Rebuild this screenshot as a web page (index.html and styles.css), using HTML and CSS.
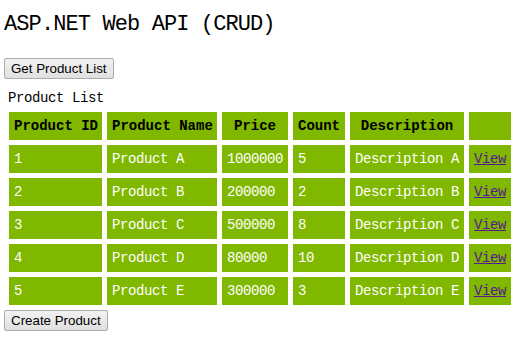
FILE: index.html
```html
<!DOCTYPE html>
<html lang="en">

<head>
  <meta charset="UTF-8" />
  <title>ASP.NET Web API (CRUD)</title>
  <link rel="stylesheet" href="styles.css">
</head>

<body>
  <h1 class="title">ASP.NET Web API (CRUD)</h1>

  <div class="actions">
    <button class="btn">Get Product List</button>
  </div>

  <table class="products">
    <caption>Product List</caption>
    <colgroup>
      <col class="c-id">
      <col class="c-name">
      <col class="c-price">
      <col class="c-count">
      <col class="c-desc">
      <col class="c-view">
    </colgroup>
    <thead>
      <tr>
        <th>Product ID</th>
        <th>Product Name</th>
        <th>Price</th>
        <th>Count</th>
        <th>Description</th>
        <th></th>
      </tr>
    </thead>
    <tbody>
      <tr>
        <td>1</td>
        <td>Product A</td>
        <td>1000000</td>
        <td>5</td>
        <td>Description A</td>
        <td><a href="#">View</a></td>
      </tr>
      <tr>
        <td>2</td>
        <td>Product B</td>
        <td>200000</td>
        <td>2</td>
        <td>Description B</td>
        <td><a href="#">View</a></td>
      </tr>
      <tr>
        <td>3</td>
        <td>Product C</td>
        <td>500000</td>
        <td>8</td>
        <td>Description C</td>
        <td><a href="#">View</a></td>
      </tr>
      <tr>
        <td>4</td>
        <td>Product D</td>
        <td>80000</td>
        <td>10</td>
        <td>Description D</td>
        <td><a href="#">View</a></td>
      </tr>
      <tr>
        <td>5</td>
        <td>Product E</td>
        <td>300000</td>
        <td>3</td>
        <td>Description E</td>
        <td><a href="#">View</a></td>
      </tr>
    </tbody>
  </table>

  <button class="btn">Create Product</button>
</body>

</html>
```

FILE: styles.css
```css
body {
  margin: 0 4px;
  font-family: 'Liberation Mono', 'DejaVu Sans Mono', monospace;
  font-size: 14px;
  letter-spacing: -0.4px;
  color: #000;
  background: #fff;
}

.title {
  margin: 11px 0 19px;
  font-size: 22px;
  letter-spacing: -0.9px;
  font-weight: normal;
  line-height: 28px;
}

.actions {
  margin-bottom: 10px;
}

.btn {
  height: 21px;
  padding: 0 6px;
  font-family: 'Liberation Sans', Arial, sans-serif;
  font-size: 13.33px;
  letter-spacing: 0;
  color: #000;
  background: linear-gradient(#f2f2f2, #e0e0e0);
  border: 1px solid #acacac;
  border-radius: 2px;
}

.products {
  border-spacing: 5px;
  border-collapse: separate;
  table-layout: fixed;
  width: 507px;
  margin: 0;
}

.products caption {
  text-align: left;
  padding-left: 4px;
  line-height: 18px;
}

.c-id { width: 93px; }
.c-name { width: 110px; }
.c-price { width: 66px; }
.c-count { width: 52px; }
.c-desc { width: 114px; }
.c-view { width: 42px; }

.products th,
.products td {
  background: #80b800;
  height: 28px;
  padding: 0 5px;
  box-sizing: border-box;
  white-space: nowrap;
  overflow: hidden;
}

.products th {
  font-weight: bold;
  letter-spacing: 0;
  text-align: center;
}

.products td {
  color: #fff;
  text-align: left;
}

.products a {
  color: #551a8b;
}
```
